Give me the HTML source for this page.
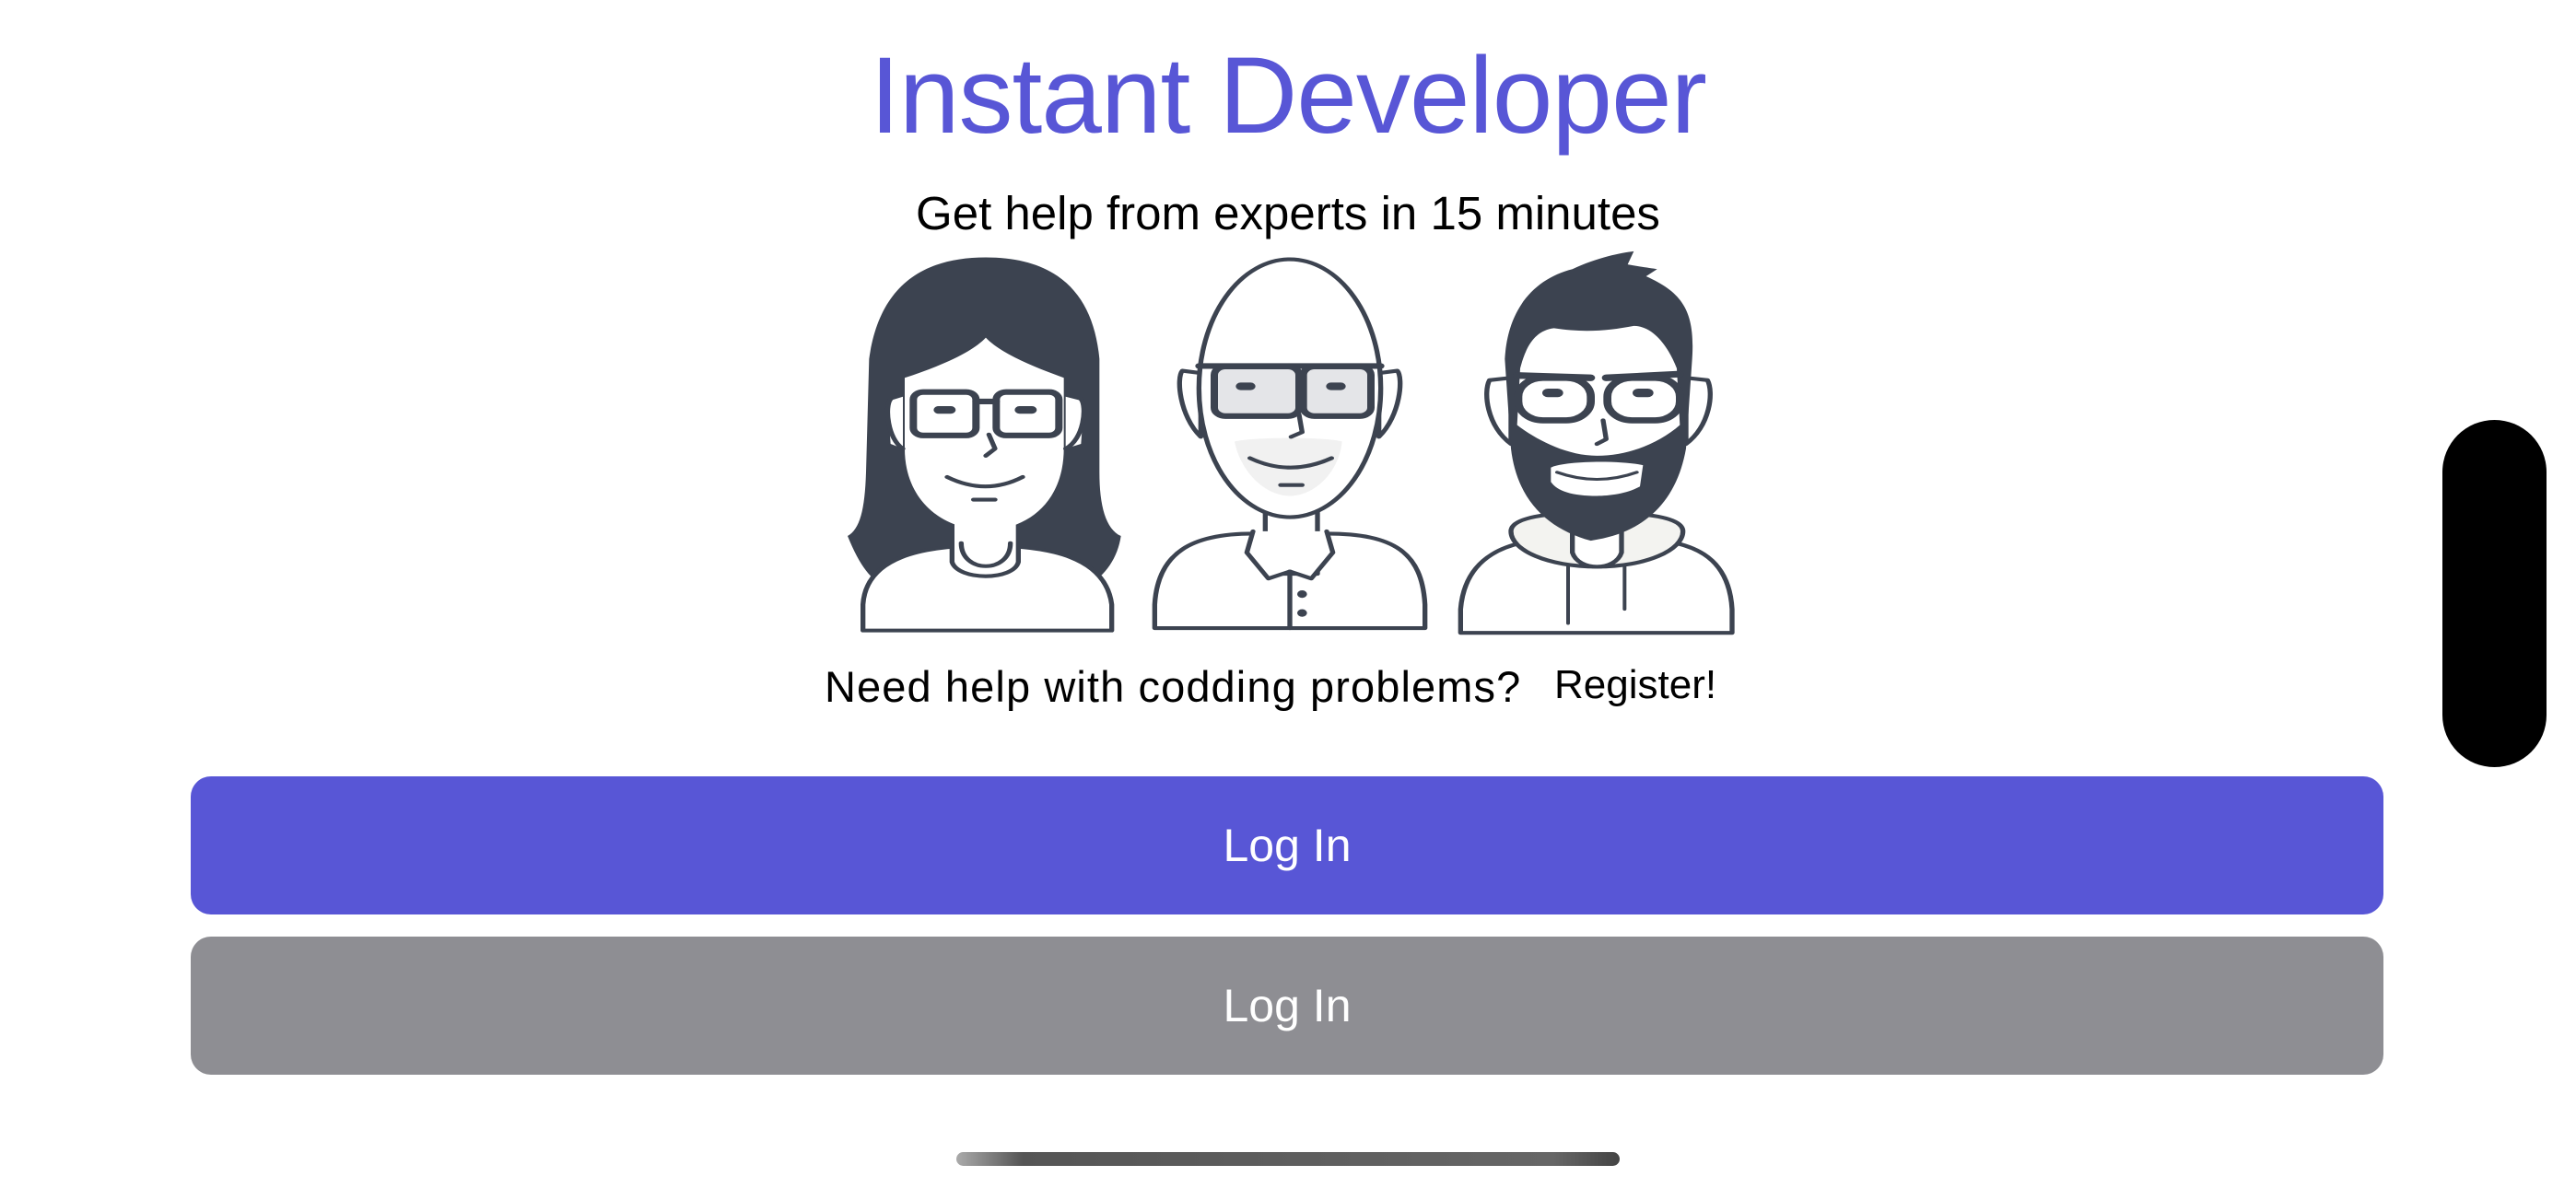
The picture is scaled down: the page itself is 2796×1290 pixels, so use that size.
<!DOCTYPE html>
<html><head><meta charset="utf-8"><style>
html,body{margin:0;padding:0;width:2796px;height:1290px;overflow:hidden;background:#fff;font-family:"Liberation Sans",sans-serif;}
.t{position:absolute;white-space:nowrap;}
.btn{position:absolute;left:207px;width:2380px;border-radius:22px;color:#fff;font-size:50px;display:flex;align-items:center;justify-content:center;}
</style></head><body>
<div class="t" style="left:0;width:2796px;text-align:center;top:36px;font-size:118px;color:#5856D6;letter-spacing:-1px;">Instant Developer</div>
<div class="t" style="left:0;width:2796px;text-align:center;top:202px;font-size:51px;color:#000;">Get help from experts in 15 minutes</div>
<div class="t" style="left:895px;top:718px;font-size:47px;letter-spacing:1.1px;color:#000;">Need help with codding problems?</div>
<div class="t" style="left:1687px;top:719px;font-size:44px;color:#000;">Register!</div>

<svg style="position:absolute;left:880px;top:0" width="1040" height="800" viewBox="0 0 1560 1560" preserveAspectRatio="none" fill="none" stroke="#3C4350" stroke-width="8" stroke-linecap="round" stroke-linejoin="round">
<!-- woman -->
<path fill="#3C4350" stroke="none" d="M285,545 C170,545 110,620 95,760 L90,1000 C88,1080 80,1120 60,1135 C80,1200 100,1230 120,1240 L450,1240 C480,1220 500,1180 505,1135 C480,1120 470,1070 470,1000 L470,760 C460,620 400,545 285,545Z"/>
<path fill="#fff" d="M85,1335 L85,1280 C90,1180 180,1155 285,1155 C390,1155 480,1180 490,1280 L490,1335 Z"/>
<path fill="#fff" d="M230,1080 L230,1190 C240,1230 330,1230 338,1190 L338,1080"/>
<path d="M245,1150 C245,1215 325,1215 325,1150"/>
<path fill="#fff" stroke="none" d="M125,850 L150,840 L150,950 L130,940Z M415,840 L445,850 L440,940 L415,950Z"/>
<path fill="#fff" d="M153,800 C200,780 260,750 285,715 C310,750 370,780 412,800 L412,950 C412,1060 355,1122 285,1122 C215,1122 153,1060 153,950 Z" stroke="none"/>
<path d="M130,845 C120,860 125,930 150,950 M440,845 C450,860 445,930 415,950"/>
<rect x="167" y="830" width="102" height="92" rx="16" stroke-width="12"/>
<rect x="302" y="830" width="102" height="92" rx="16" stroke-width="12"/>
<path d="M269,850 L302,850" stroke-width="12"/>
<path d="M208,868 L228,868 M340,868 L360,868" stroke-width="16"/>
<path d="M290,920 L300,950 L285,965"/>
<path d="M222,1010 Q285,1050 345,1010"/>
<path d="M265,1058 L300,1058"/>
<!-- bald -->
<path fill="#fff" d="M560,1330 L560,1280 C565,1170 620,1130 720,1130 L840,1130 C950,1130 995,1170 1000,1280 L1000,1330 Z"/>
<path fill="#fff" d="M740,1080 L740,1215 L780,1215 L825,1215 L825,1080"/>
<path fill="#fff" d="M720,1125 L710,1170 L745,1225 L780,1210 L815,1225 L850,1170 L840,1125"/>
<path d="M780,1210 L780,1330"/>
<circle cx="800" cy="1258" r="4" fill="#3C4350"/><circle cx="800" cy="1298" r="4" fill="#3C4350"/>
<path fill="#fff" d="M605,785 C595,800 600,880 635,925 L635,790Z M955,785 C965,800 960,880 925,925 L925,790Z"/>
<ellipse cx="780" cy="822" rx="148" ry="273" fill="#fff"/>
<path fill="#f1f1f1" stroke="none" d="M690,935 C720,925 840,925 865,935 C860,1000 820,1050 780,1050 C740,1050 700,1000 690,935Z"/>
<path d="M632,775 L928,775" stroke-width="12"/>
<rect x="657" y="776" width="138" height="105" rx="18" fill="#e4e5e8" stroke-width="12"/>
<rect x="802" y="776" width="110" height="105" rx="18" fill="#e4e5e8" stroke-width="12"/>
<path d="M700,818 L716,818 M847,818 L863,818" stroke-width="16"/>
<path d="M795,878 L800,915 L782,925"/>
<path d="M715,970 Q780,1010 848,970"/>
<path d="M765,1027 L800,1027"/>
<!-- bearded -->
<path fill="#fff" d="M1058,1340 L1058,1290 C1065,1180 1130,1140 1230,1140 L1330,1140 C1440,1140 1495,1180 1500,1290 L1500,1340 Z"/>
<path fill="#f3f3f0" d="M1140,1125 C1140,1095 1200,1085 1280,1085 C1360,1085 1420,1095 1420,1125 C1420,1165 1360,1200 1280,1200 C1200,1200 1140,1165 1140,1125Z"/>
<path fill="#fff" d="M1240,1095 L1240,1170 C1250,1210 1310,1210 1320,1170 L1320,1095"/>
<path d="M1233,1200 L1233,1320 M1325,1200 L1325,1290" stroke-width="6"/>
<path fill="#fff" d="M1105,805 C1095,830 1100,900 1140,940 L1140,800Z M1460,805 C1470,830 1465,900 1425,940 L1425,800Z"/>
<path fill="#3C4350" stroke="none" d="M1240,570 C1280,545 1320,535 1340,532 L1330,560 C1350,565 1370,568 1378,570 L1360,585 C1420,620 1440,660 1435,760 L1425,950 C1410,1060 1360,1120 1290,1140 L1270,1145 C1200,1120 1150,1060 1140,950 L1130,760 C1135,650 1180,590 1240,570Z"/>
<path fill="#fff" stroke="none" d="M1155,780 C1165,730 1180,700 1210,695 C1260,705 1300,700 1340,690 C1370,690 1395,730 1410,780 L1415,900 C1380,940 1330,965 1280,965 C1230,965 1180,930 1150,900 Z"/>
<path fill="#fff" stroke="none" d="M1205,990 C1230,975 1320,975 1355,985 L1350,1030 C1330,1045 1300,1050 1280,1050 C1240,1050 1215,1040 1205,1020Z"/>
<path d="M1215,1000 Q1280,1030 1345,1000" stroke-width="6"/>
<path d="M1150,795 L1270,800 M1295,800 L1415,792" stroke-width="14"/>
<rect x="1152" y="800" width="118" height="90" rx="40" stroke-width="13"/>
<rect x="1297" y="800" width="118" height="90" rx="40" stroke-width="13"/>
<path d="M1200,832 L1216,832 M1347,832 L1363,832" stroke-width="18"/>
<path d="M1290,890 L1295,930 L1280,940"/>
</svg>

<div class="btn" style="top:843px;height:150px;background:#5856D6;">Log In</div>
<div class="btn" style="top:1017px;height:150px;background:#8E8E93;">Log In</div>
<div style="position:absolute;left:2651px;top:456px;width:113px;height:377px;border-radius:57px;background:#000;"></div>
<div style="position:absolute;left:1038px;top:1251px;width:720px;height:15px;border-radius:8px;background:linear-gradient(90deg,#aaa,#555 10%,#666 90%,#444);"></div>
</body></html>
